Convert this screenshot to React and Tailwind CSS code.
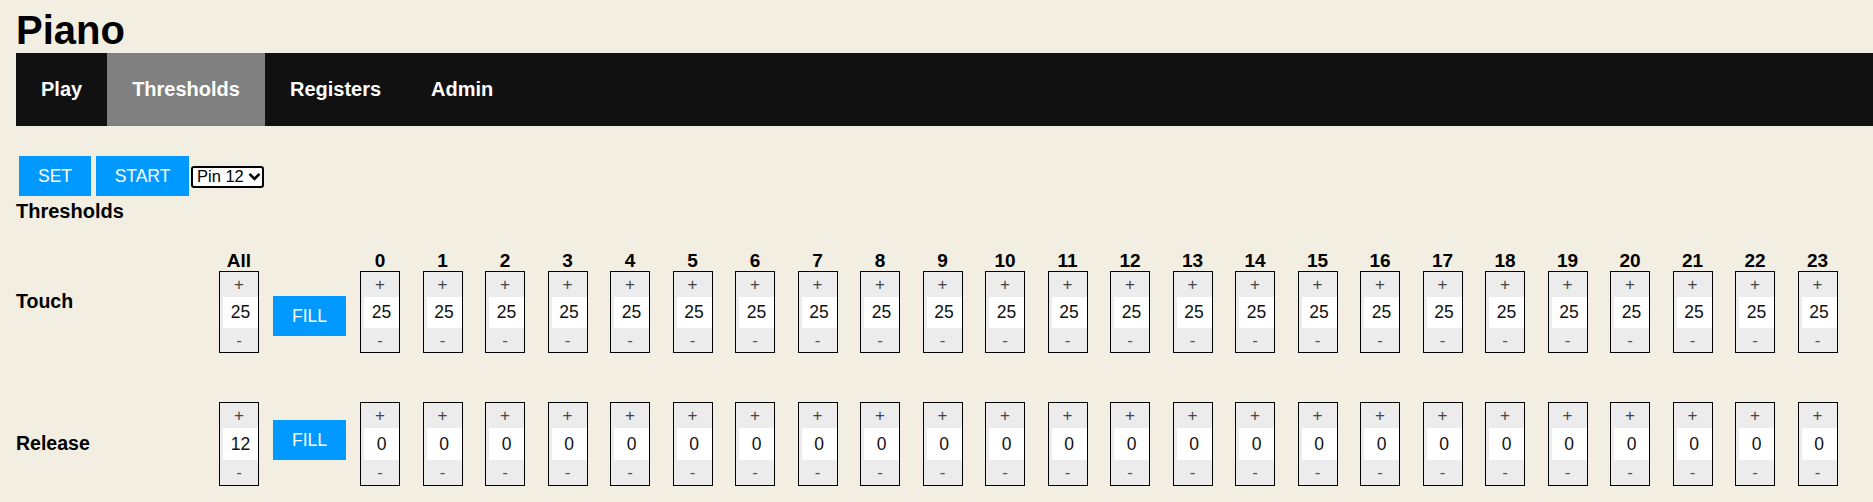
import React from "react";

const PINS = Array.from({ length: 24 }, (_, i) => i);

function Stepper({ value, tall }) {
  return (
    <div className={`flex w-[40px] flex-col border border-black bg-[#ececec] ${tall ? "h-[84px]" : "h-[82px]"}`}>
      <div className="flex h-[25px] items-center justify-center text-[17px] leading-none text-[#444]">+</div>
      <div className={`ml-[3px] flex items-center justify-center bg-white text-[17.5px] text-[#111] ${tall ? "h-[32px]" : "h-[31px]"}`}>
        {value}
      </div>
      <div className="flex flex-1 items-center justify-center text-[17px] leading-none text-[#555]">-</div>
    </div>
  );
}

function Column({ label, value, tall }) {
  return (
    <div className="flex w-[40px] flex-col items-center">
      {label !== undefined && (
        <div className="h-[21px] whitespace-nowrap text-[19px] font-bold leading-[21px] text-black">{label}</div>
      )}
      <Stepper value={value} tall={tall} />
    </div>
  );
}

function FillButton({ className }) {
  return (
    <button
      type="button"
      className={`h-[40px] w-[73px] bg-[#0099ff] text-[17.5px] text-white ${className}`}
    >
      FILL
    </button>
  );
}

export default function App() {
  return (
    <div className="min-h-screen bg-[#f2eee1] pl-4 font-['Liberation_Sans',Arial,sans-serif] text-black">
      <h1 className="pt-[7px] text-[40px] font-bold leading-[46px]">Piano</h1>

      {/* top menu */}
      <nav className="flex bg-[#111111] text-[20px] font-bold leading-[23px] text-white">
        <a className="px-[25px] py-[25px]">Play</a>
        <a className="bg-[#808080] px-[25px] py-[25px]">Thresholds</a>
        <a className="px-[25px] py-[25px]">Registers</a>
        <a className="px-[25px] py-[25px]">Admin</a>
      </nav>

      <div className="mt-[30px] flex items-center">
        <button type="button" className="ml-[3px] h-[40px] w-[72px] bg-[#0099ff] text-[17.5px] text-white">
          SET
        </button>
        <button type="button" className="ml-[5px] h-[40px] w-[93px] bg-[#0099ff] text-[17.5px] text-white">
          START
        </button>
        <div className="ml-[2px] mt-[1px] flex h-[22px] w-[73px] items-center rounded-[3px] border-2 border-black bg-white pl-[4px] text-[16.5px] leading-none">
          <span>Pin 12</span>
          <svg className="ml-[4px]" width="13" height="9" viewBox="0 0 13 9">
            <path d="M1.5 1.8 L6.5 6.8 L11.5 1.8" fill="none" stroke="#000" strokeWidth="2.6" />
          </svg>
        </div>
      </div>

      <div className="mt-[4px] text-[20px] font-bold leading-[23px]">Thresholds</div>

      {/* touch row */}
      <div className="mt-[27px] flex items-start">
        <div className="mt-[40px] w-[203px] text-[19.5px] font-bold leading-[23px]">Touch</div>
        <Column label="All" value={25} />
        <FillButton className="ml-[14px] mt-[46px]" />
        <div className="ml-[14px] flex gap-[22.5px]">
          {PINS.map((p) => (
            <Column key={p} label={String(p)} value={25} />
          ))}
        </div>
      </div>

      {/* release row */}
      <div className="mt-[49px] flex items-start">
        <div className="mt-[30px] w-[203px] text-[19.5px] font-bold leading-[23px]">Release</div>
        <Column value={12} tall />
        <FillButton className="ml-[14px] mt-[18px]" />
        <div className="ml-[14px] flex gap-[22.5px]">
          {PINS.map((p) => (
            <Column key={p} value={0} tall />
          ))}
        </div>
      </div>
    </div>
  );
}
